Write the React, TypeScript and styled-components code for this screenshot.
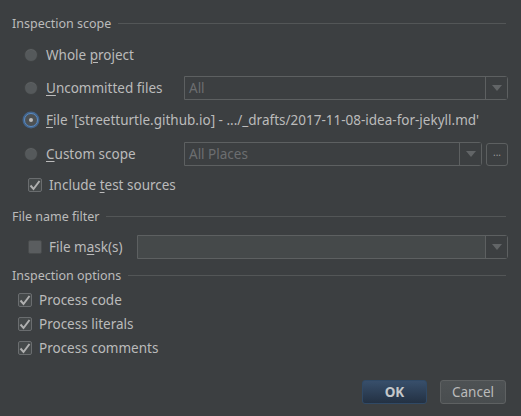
import React from "react";
import styled, { createGlobalStyle } from "styled-components";

const Global = createGlobalStyle`
  html, body { margin: 0; padding: 0; background: #3c3f41; }
  body { font-family: "Noto Sans", "DejaVu Sans", sans-serif; font-size: 13.5px; color: #bbbbbb; }
`;

const Dialog = styled.div`
  width: 521px;
  height: 416px;
  box-sizing: border-box;
  background: #3c3f41;
  padding: 14px 15px 0 12px;
  display: flex;
  flex-direction: column;
`;

const TitleRow = styled.div<{ $top: number }>`
  display: flex;
  align-items: center;
  height: 18px;
  margin-top: ${(p) => p.$top}px;
  gap: 7px;
`;

const TitleText = styled.span`
  white-space: nowrap;
  color: #bbbbbb;
  font-size: 12.5px;
`;

const TitleLine = styled.div`
  flex: 1;
  height: 1px;
  background: #535657;
`;

const Row = styled.div<{ $top: number; $indent: number; $h?: number }>`
  display: flex;
  align-items: center;
  height: ${(p) => p.$h ?? 26}px;
  margin-top: ${(p) => p.$top}px;
  padding-left: ${(p) => p.$indent}px;
`;

const Label = styled.span<{ $w?: number }>`
  white-space: nowrap;
  color: #bbbbbb;
  ${(p) => (p.$w ? `width: ${p.$w}px; flex: none;` : "")}
`;

const U = styled.span`
  text-decoration: underline;
  text-underline-offset: 2px;
`;

const RadioCircle = styled.span<{ $on?: boolean }>`
  width: 14px;
  height: 14px;
  border-radius: 50%;
  box-sizing: border-box;
  flex: none;
  margin-right: 8px;
  display: flex;
  align-items: center;
  justify-content: center;
  background: ${(p) => (p.$on ? "#4d5153" : "#55595b")};
  border: 1px solid ${(p) => (p.$on ? "#5a8cc4" : "#3f4243")};
  box-shadow: ${(p) => (p.$on ? "0 0 0 1.5px rgba(70,120,180,0.65)" : "inset 0 1px 0 rgba(255,255,255,0.06)")};
`;

const RadioDot = styled.span`
  width: 4px;
  height: 4px;
  border-radius: 50%;
  background: #bdbdbd;
`;

const CheckBox = styled.span<{ $on?: boolean }>`
  width: 14px;
  height: 14px;
  box-sizing: border-box;
  flex: none;
  border-radius: 2px;
  margin-right: 7px;
  display: flex;
  align-items: center;
  justify-content: center;
  background: ${(p) => (p.$on ? "#45494a" : "#5a5d5f")};
  border: 1px solid ${(p) => (p.$on ? "#6a6d6f" : "#484b4c")};
`;

const Combo = styled.div<{ $w: number; $filled?: boolean }>`
  margin-left: auto;
  width: ${(p) => p.$w}px;
  height: 24px;
  box-sizing: border-box;
  border: 1px solid #5d6061;
  border-radius: 0 3px 3px 0;
  background: ${(p) => (p.$filled ? "#45494a" : "transparent")};
  display: flex;
  align-items: center;
`;

const ComboText = styled.span`
  flex: 1;
  padding-left: 4px;
  color: #6c6e70;
`;

const ArrowBox = styled.span`
  width: 21px;
  height: 100%;
  border-left: 1px solid #5d6061;
  display: flex;
  align-items: center;
  justify-content: center;
  flex: none;
  background: #3c3f41;
`;

const Arrow = styled.span`
  width: 0;
  height: 0;
  border-left: 5px solid transparent;
  border-right: 5px solid transparent;
  border-top: 6px solid #626567;
`;

const DotsButton = styled.div`
  width: 22px;
  height: 23px;
  box-sizing: border-box;
  border: 1px solid #5d6061;
  border-radius: 3px;
  margin-left: 4px;
  margin-right: -2px;
  display: flex;
  align-items: center;
  justify-content: center;
  font-size: 10px;
  color: #9a9a9a;
  padding-bottom: 4px;
`;

const Footer = styled.div`
  display: flex;
  justify-content: flex-end;
  gap: 13px;
  margin-top: 20px;
`;

const Button = styled.button<{ $primary?: boolean }>`
  width: ${(p) => (p.$primary ? 65 : 66)}px;
  height: 24px;
  box-sizing: border-box;
  border-radius: 3px;
  font-family: "Noto Sans", "DejaVu Sans", sans-serif;
  font-size: 13.5px;
  padding: 0;
  color: ${(p) => (p.$primary ? "#c4c7ca" : "#bbbbbb")};
  font-weight: ${(p) => (p.$primary ? 700 : 400)};
  background: ${(p) => (p.$primary ? "linear-gradient(#384f6b, #233143)" : "linear-gradient(#4e5254, #494d4f)")};
  border: 1px solid ${(p) => (p.$primary ? "#304965" : "#5e6162")};
`;

const CheckMark = () => (
  <svg width="12" height="11" viewBox="0 0 12 11">
    <path d="M1.5 5.5 L4.5 9 L10.5 1" fill="none" stroke="#b0b0b0" strokeWidth="2" />
  </svg>
);

const Radio = ({ on }: { on?: boolean }) => (
  <RadioCircle $on={on}>{on && <RadioDot />}</RadioCircle>
);

const Check = ({ on }: { on?: boolean }) => <CheckBox $on={on}>{on && <CheckMark />}</CheckBox>;

export default function App() {
  return (
    <>
      <Global />
      <Dialog>
        <TitleRow $top={0}>
          <TitleText>Inspection scope</TitleText>
          <TitleLine />
        </TitleRow>
        <Row $top={10} $indent={12}>
          <Radio />
          <Label>
            Whole <U>p</U>roject
          </Label>
        </Row>
        <Row $top={7} $indent={12}>
          <Radio />
          <Label>
            <U>U</U>ncommitted files
          </Label>
          <Combo $w={324} style={{ marginRight: -2 }}>
            <ComboText>All</ComboText>
            <ArrowBox>
              <Arrow />
            </ArrowBox>
          </Combo>
        </Row>
        <Row $top={6} $indent={12}>
          <Radio on />
          <Label>
            <U>F</U>ile '[streetturtle.github.io] - .../_drafts/2017-11-08-idea-for-jekyll.md'
          </Label>
        </Row>
        <Row $top={8} $indent={12}>
          <Radio />
          <Label>
            <U>C</U>ustom scope
          </Label>
          <Combo $w={298}>
            <ComboText>All Places</ComboText>
            <ArrowBox>
              <Arrow />
            </ArrowBox>
          </Combo>
          <DotsButton>...</DotsButton>
        </Row>
        <Row $top={5} $indent={16}>
          <Check on />
          <Label>
            Include <U>t</U>est sources
          </Label>
        </Row>
        <TitleRow $top={9}>
          <TitleText>File name filter</TitleText>
          <TitleLine />
        </TitleRow>
        <Row $top={9} $indent={16}>
          <Check />
          <Label $w={88}>
            File m<U>a</U>sk(s)
          </Label>
          <Combo $w={371} $filled style={{ marginRight: -2 }}>
            <ComboText />
            <ArrowBox>
              <Arrow />
            </ArrowBox>
          </Combo>
        </Row>
        <TitleRow $top={6}>
          <TitleText>Inspection options</TitleText>
          <TitleLine />
        </TitleRow>
        <Row $top={4} $indent={6} $h={24}>
          <Check on />
          <Label>Process code</Label>
        </Row>
        <Row $top={0} $indent={6} $h={24}>
          <Check on />
          <Label>Process literals</Label>
        </Row>
        <Row $top={0} $indent={6} $h={24}>
          <Check on />
          <Label>Process comments</Label>
        </Row>
        <Footer>
          <Button $primary>OK</Button>
          <Button>Cancel</Button>
        </Footer>
      </Dialog>
    </>
  );
}
